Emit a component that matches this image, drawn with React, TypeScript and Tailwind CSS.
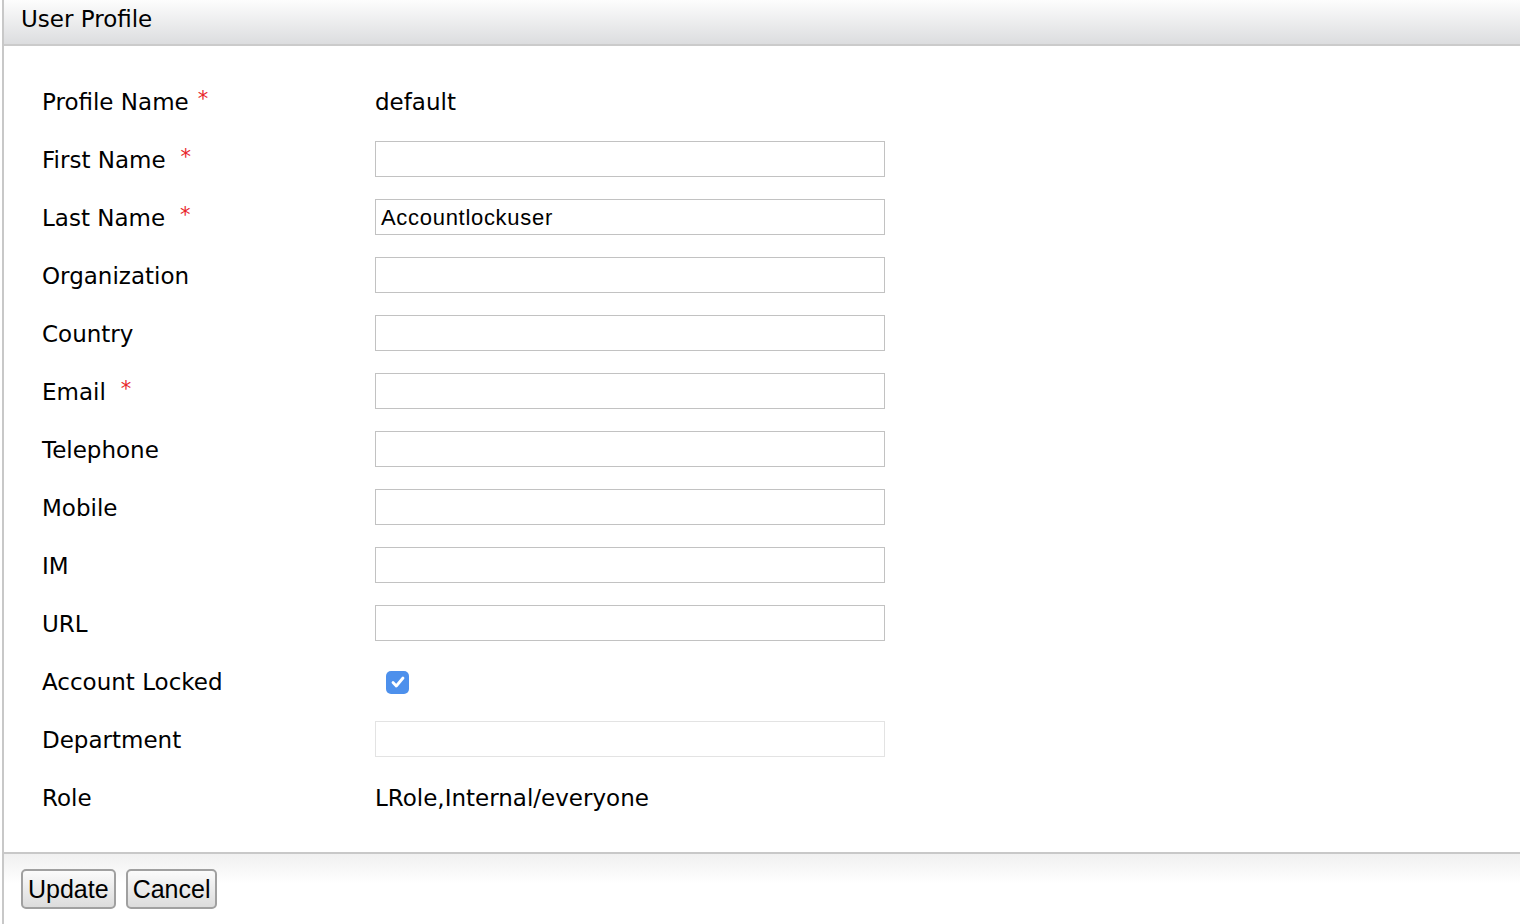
import React from 'react';

type Field = {
  label: string;
  req?: 'tight' | 'wide';
  kind: 'text' | 'input' | 'check' | 'disabled';
  value?: string;
};

const fields: Field[] = [
  { label: 'Profile Name', req: 'tight', kind: 'text', value: 'default' },
  { label: 'First Name', req: 'wide', kind: 'input' },
  { label: 'Last Name', req: 'wide', kind: 'input', value: 'Accountlockuser' },
  { label: 'Organization', kind: 'input' },
  { label: 'Country', kind: 'input' },
  { label: 'Email', req: 'wide', kind: 'input' },
  { label: 'Telephone', kind: 'input' },
  { label: 'Mobile', kind: 'input' },
  { label: 'IM', kind: 'input' },
  { label: 'URL', kind: 'input' },
  { label: 'Account Locked', kind: 'check' },
  { label: 'Department', kind: 'disabled' },
  { label: 'Role', kind: 'text', value: 'LRole,Internal/everyone' },
];

const sans = "font-['DejaVu_Sans','Verdana',sans-serif]";
const arial = "font-['Liberation_Sans','Arial',sans-serif]";

function Value({ f }: { f: Field }) {
  if (f.kind === 'text') {
    return <span className={`${sans} text-[23px] text-black pt-[2px]`}>{f.value}</span>;
  }
  if (f.kind === 'check') {
    return (
      <div className="ml-[11px] mt-[2px] w-[23px] h-[23px] rounded-[5px] bg-[#4d90ec] flex items-center justify-center">
        <svg width="16" height="16" viewBox="0 0 16 16" fill="none">
          <path d="M3 8.6 L6.3 12 L13 4" stroke="white" strokeWidth="2.8" strokeLinecap="round" strokeLinejoin="round" />
        </svg>
      </div>
    );
  }
  return (
    <div
      className={`w-[510px] h-[36px] border flex items-center px-[5px] bg-white ${
        f.kind === 'disabled' ? 'border-[#e3e3e3]' : 'border-[#c2c2c2]'
      }`}
    >
      <span className={`${arial} text-[22px] tracking-[0.7px] text-black leading-none pt-[2px]`}>{f.value ?? ''}</span>
    </div>
  );
}

export default function App() {
  return (
    <div className="w-[1520px] h-[924px] bg-white overflow-hidden flex">
      <div className="w-[2px]" />
      <div className="flex-1 flex flex-col border-l-2 border-[#c8c8c8]">
        {/* Header */}
        <div className="h-[46px] border-b-2 border-[#cbcbcb] bg-gradient-to-b from-[#fdfdfd] to-[#dcdddf] flex items-center pl-[17px] pb-[5px]">
          <span className={`${sans} text-[23px] text-black`}>User Profile</span>
        </div>

        {/* Form */}
        <div className="pt-[26px] pb-[26px] pl-[38px] flex flex-col">
          {fields.map((f) => (
            <div key={f.label} className="h-[58px] flex items-center">
              <div className={`w-[333px] ${sans} text-[23px] text-black flex items-center pt-[2px]`}>
                <span>{f.label}</span>
                {f.req && (
                  <span className={`text-[#e8262b] text-[21px] ${f.req === 'tight' ? 'ml-[9px]' : 'ml-[15px]'} -mt-[4px]`}>
                    *
                  </span>
                )}
              </div>
              <Value f={f} />
            </div>
          ))}
        </div>

        {/* Footer */}
        <div className="flex-1 border-t-2 border-[#c8c8c8] bg-gradient-to-b from-[#f0f0f0] to-white to-[30px] flex items-start gap-[10px] pl-[17px] pt-[15px]">
          {['Update', 'Cancel'].map((b) => (
            <button
              key={b}
              className={`${arial} text-[25px] h-[40px] px-[5px] rounded-[5px] border-2 border-[#a0a0a0] bg-gradient-to-b from-[#fbfbfb] to-[#dcdcdc] text-black leading-none`}
            >
              {b}
            </button>
          ))}
        </div>
      </div>
    </div>
  );
}
